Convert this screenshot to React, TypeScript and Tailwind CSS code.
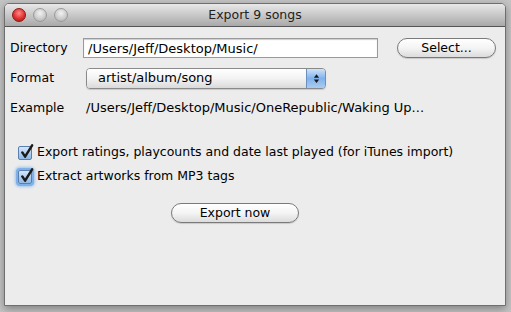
import { useState } from 'react';

function Light({ color }: { color: 'red' | 'gray' }) {
  const bg =
    color === 'red'
      ? 'bg-[radial-gradient(circle_at_50%_35%,#ff8a8a_0%,#e0322f_55%,#9c1410_100%)] border-[#8a1a17]'
      : 'bg-[radial-gradient(circle_at_50%_35%,#f2f2f2_0%,#c9c9c9_60%,#a5a5a5_100%)] border-[#9a9a9a]';
  return <div className={`w-[14px] h-[14px] rounded-full border ${bg}`} />;
}

function Check({ glow }: { glow?: boolean }) {
  return (
    <div
      className={`relative w-[14px] h-[14px] rounded-[2px] border border-[#5a7fae] bg-gradient-to-b from-[#d5e6f8] to-[#8fb8e6] ${
        glow ? 'shadow-[0_0_0_2px_#7fb0e8,0_0_3px_3px_#9cc3ee]' : ''
      }`}
    >
      <svg viewBox="0 0 16 16" className="absolute -top-[3px] left-[0px] w-[15px] h-[15px]">
        <path d="M3.5 9 L6.5 13.5 L14 1.5" fill="none" stroke="#1a1a1a" strokeWidth="2.6" strokeLinecap="round" strokeLinejoin="round" />
      </svg>
    </div>
  );
}

function Pill({ children, className }: { children: string; className: string }) {
  return (
    <button
      className={`h-[20px] rounded-full border border-[#7a7a7a] bg-gradient-to-b from-white via-[#f4f4f4] to-[#dcdcdc] text-[12.5px] text-black shadow-[0_1px_1px_rgba(0,0,0,0.15)] ${className}`}
    >
      {children}
    </button>
  );
}

export default function App() {
  const [dir, setDir] = useState('/Users/Jeff/Desktop/Music/');

  return (
    <div
      className="w-[511px] h-[312px] bg-[#c4c4c4] px-[4px] pt-[3px] pb-[6px] overflow-hidden"
      style={{ fontFamily: '"DejaVu Sans", "Lucida Grande", sans-serif' }}
    >
      <div className="w-[502px] h-[303px] flex flex-col rounded-t-[5px] border border-[#6f6f6f] bg-[#ececec] shadow-[0_3px_8px_rgba(0,0,0,0.35)] overflow-hidden">
        {/* title bar */}
        <div className="relative h-[23px] flex items-center bg-gradient-to-b from-[#e8e8e8] to-[#a9a9a9] border-b border-[#555]">
          <div className="flex gap-[7px] pl-[7px]">
            <Light color="red" />
            <Light color="gray" />
            <Light color="gray" />
          </div>
          <div className="absolute inset-0 flex items-center justify-center text-[12.5px] text-[#222]">
            Export 9 songs
          </div>
        </div>

        <div className="flex flex-col pl-[5px] pr-[9px] pt-[10px] text-[12.5px] text-black">
          <div className="flex items-center h-[22px]">
            <span className="w-[73px]">Directory</span>
            <input
              value={dir}
              onChange={(e) => setDir(e.target.value)}
              className="w-[295px] h-[20px] px-[4px] border border-[#9a9a9a] bg-white shadow-[inset_0_1px_1px_rgba(0,0,0,0.2)] text-[13px] outline-none"
            />
            <Pill className="ml-auto w-[99px]">Select...</Pill>
          </div>

          <div className="flex items-center h-[22px] mt-[8px]">
            <span className="w-[76px]">Format</span>
            <div className="flex w-[240px] h-[21px] rounded-[4px] border border-[#8a8a8a] overflow-hidden shadow-[0_1px_1px_rgba(0,0,0,0.15)]">
              <div className="flex-1 flex items-center pl-[11px] bg-gradient-to-b from-white via-[#f3f3f3] to-[#dadada] text-[13px]">
                artist/album/song
              </div>
              <div className="w-[19px] flex items-center justify-center bg-gradient-to-b from-[#cfe3fa] via-[#7fb2ea] to-[#a8cdf3] border-l border-[#6b8fbf]">
                <svg viewBox="0 0 8 12" className="w-[7px] h-[11px]">
                  <path d="M4 1 L7 5 L1 5 Z M4 11 L7 7 L1 7 Z" fill="#1a1a1a" />
                </svg>
              </div>
            </div>
          </div>

          <div className="flex items-center h-[22px] mt-[8px]">
            <span className="w-[76px]">Example</span>
            <span className="text-[13px]">/Users/Jeff/Desktop/Music/OneRepublic/Waking Up...</span>
          </div>

          <div className="flex flex-col gap-[9px] mt-[26px] pl-[8px]">
            <label className="flex items-center gap-[5px] h-[15px]">
              <Check />
              <span>Export ratings, playcounts and date last played (for iTunes import)</span>
            </label>
            <label className="flex items-center gap-[5px] h-[15px]">
              <Check glow />
              <span>Extract artworks from MP3 tags</span>
            </label>
          </div>

          <div className="flex mt-[19px] pl-[161px]">
            <Pill className="w-[128px]">Export now</Pill>
          </div>
        </div>
      </div>
    </div>
  );
}
